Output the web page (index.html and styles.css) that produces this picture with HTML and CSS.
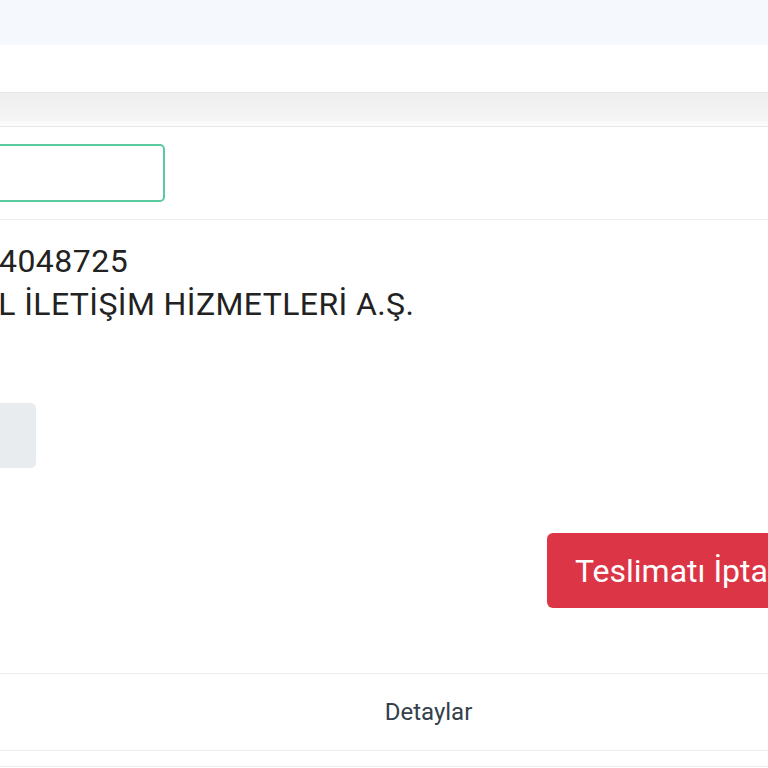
FILE: index.html
```html
<!DOCTYPE html>
<html lang="tr">

<head>
    <meta charset="UTF-8">
    <meta name="viewport" content="width=device-width, initial-scale=1.0">
    <title>Teslimat Detayı</title>
    <link rel="stylesheet" href="styles.css">
</head>

<body>
    <div class="topbar"></div>
    <div class="header"></div>
    <div class="tabs"></div>

    <div class="search-row">
        <div class="content">
            <input class="search" type="text" name="" id="search">
        </div>
    </div>

    <div class="info">
        <div class="content">
            <p class="line code">53291904048725</p>
            <p class="line company">TURKCELL İLETİŞİM HİZMETLERİ A.Ş.</p>
            <div class="status-box"></div>
            <div class="actions">
                <button class="btn-cancel" type="button">Teslimatı İptal Et</button>
            </div>
        </div>
    </div>

    <div class="details-link">Detaylar</div>
    <div class="next-row"></div>
</body>

</html>
```

FILE: styles.css
```css
* {
    margin: 0;
    padding: 0;
    box-sizing: border-box;
}

body {
    width: 768px;
    height: 768px;
    overflow: hidden;
    background: #fff;
    font-family: Roboto, "Liberation Sans", Arial, sans-serif;
    color: #222;
}

.topbar {
    height: 45px;
    background: #f5f9fd;
}

.header {
    height: 47px;
    background: #fff;
}

.tabs {
    height: 35px;
    background: linear-gradient(#eeeeee, #f5f5f5 84%, #fbfbfb 88%);
    border-top: 1px solid #e9e9e9;
    border-bottom: 1px solid #e8e8e8;
}

.search-row .content {
    margin-left: -125px;
}

.search-row {
    padding: 17px 0 17px;
    border-bottom: 1px solid #ededed;
}

.search {
    display: block;
    width: 290px;
    height: 58px;
    border: 2px solid #5cc9a0;
    border-radius: 5px;
    outline: none;
    background: #fff;
}

.info {
    padding-top: 20px;
}

.info .content {
    margin-left: -132px;
}

.line {
    font-size: 32px;
    line-height: 43px;
    white-space: nowrap;
    color: #222;
}

.line.code {
    text-indent: 1.5px;
    letter-spacing: 0.5px;
}

.line.company {
    text-indent: -8px;
    letter-spacing: 0.4px;
}

.status-box {
    width: 168px;
    height: 65px;
    margin-top: 77px;
    background: #e9ecef;
    border-radius: 5px;
}

.actions {
    margin-top: 65px;
    height: 75px;
}

.btn-cancel {
    margin-left: 679px;
    height: 75px;
    padding: 0 28px;
    border: none;
    border-radius: 6px;
    background: #dc3545;
    color: #fff;
    font-family: Roboto, "Liberation Sans", Arial, sans-serif;
    font-size: 32px;
    white-space: nowrap;
}

.details-link {
    margin-top: 65px;
    height: 78px;
    padding-left: 89px;
    border-top: 1px solid #ececec;
    border-bottom: 1px solid #ececec;
    text-align: center;
    line-height: 76px;
    font-size: 24px;
    color: #34404a;
}

.next-row {
    height: 16px;
    border-bottom: 1px solid #ededed;
}
```
